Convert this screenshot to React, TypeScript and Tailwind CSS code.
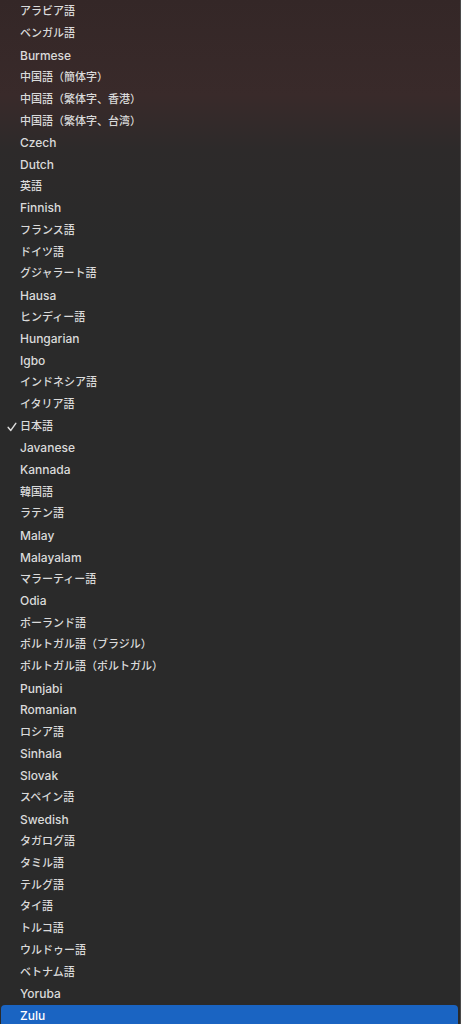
const languages = [
  "アラビア語",
  "ベンガル語",
  "Burmese",
  "中国語（簡体字）",
  "中国語（繁体字、香港）",
  "中国語（繁体字、台湾）",
  "Czech",
  "Dutch",
  "英語",
  "Finnish",
  "フランス語",
  "ドイツ語",
  "グジャラート語",
  "Hausa",
  "ヒンディー語",
  "Hungarian",
  "Igbo",
  "インドネシア語",
  "イタリア語",
  "日本語",
  "Javanese",
  "Kannada",
  "韓国語",
  "ラテン語",
  "Malay",
  "Malayalam",
  "マラーティー語",
  "Odia",
  "ポーランド語",
  "ポルトガル語（ブラジル）",
  "ポルトガル語（ポルトガル）",
  "Punjabi",
  "Romanian",
  "ロシア語",
  "Sinhala",
  "Slovak",
  "スペイン語",
  "Swedish",
  "タガログ語",
  "タミル語",
  "テルグ語",
  "タイ語",
  "トルコ語",
  "ウルドゥー語",
  "ベトナム語",
  "Yoruba",
  "Zulu",
];

const selected = "日本語";
const highlighted = "Zulu";

function CheckMark() {
  return (
    <svg width="10" height="10" viewBox="0 0 10 10" fill="none" className="text-[#dcdcdc]">
      <path d="M1.2 5.4 L3.8 8.4 L8.8 1.4" stroke="currentColor" strokeWidth="1.5" strokeLinecap="round" strokeLinejoin="round" />
    </svg>
  );
}

export default function App() {
  return (
    <div className="h-[1024px] w-[461px] overflow-hidden bg-[linear-gradient(to_bottom,#342727_0px,#392a2a_95px,#2d2a2a_150px,#2a2a2a_240px,#2a2a2a_100%)] font-['Inter','Noto_Sans_CJK_JP',sans-serif]">
      <div className="flex h-full border-r border-[#4a4a4a]">
        <ul className="grid w-full grid-rows-[repeat(47,21.83px)] pl-[1px] pr-[2px] pt-[1px]">
          {languages.map((name) => {
            const isHighlighted = name === highlighted;
            const isCjk = /[^\x00-\x7f]/.test(name);
            return (
              <li
                key={name}
                className={
                  isHighlighted
                    ? "relative flex items-center rounded-[4px] bg-[#1a64c2] pl-[19px] text-[12px] font-medium leading-none text-white"
                    : "relative flex items-center pl-[19px] text-[12px] font-medium leading-none text-[#dadada]"
                }
              >
                {name === selected && (
                  <span className="absolute left-[6px] top-1/2 -translate-y-1/2">
                    <CheckMark />
                  </span>
                )}
                <span className={isCjk ? "text-[11px]" : ""}>{name}</span>
              </li>
            );
          })}
        </ul>
      </div>
    </div>
  );
}
